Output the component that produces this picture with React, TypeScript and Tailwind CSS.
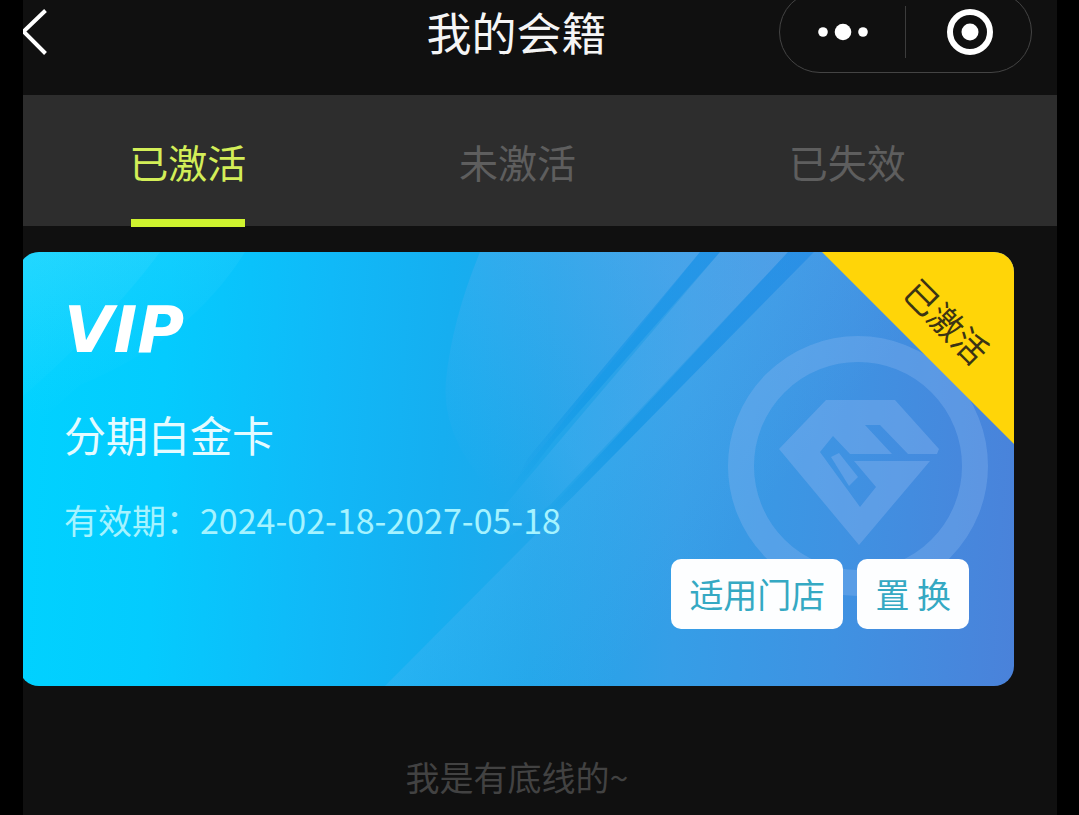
import { useState } from "react";

const tabs = ["已激活", "未激活", "已失效"];

function Header() {
  return (
    <header className="pb-[31px] pr-[47px]">
      <div className="flex h-16 items-center">
        <div className="flex flex-1">
          <button type="button" aria-label="返回" className="h-12 w-8">
            <svg viewBox="0 0 32 48" className="h-12 w-8" fill="none" stroke="#fff" strokeWidth="4">
              <path d="M22.500 2.500 0.500 23.500l22 22" />
            </svg>
          </button>
        </div>
        <h1 className="text-[45px] leading-[60px] text-[#f5f5f5]">我的会籍</h1>
        <div className="flex flex-1 justify-end">
          <div className="-mr-[22px] flex h-[82px] w-[253px] shrink-0 items-center rounded-full border border-[#444]">
            <button type="button" aria-label="更多" className="flex h-full flex-1 items-center justify-center">
              <svg viewBox="0 0 52 18" className="h-[18px] w-[52px]" fill="#fff">
                <circle cx="6" cy="9" r="4.800" />
                <circle cx="26" cy="9" r="8.300" />
                <circle cx="46" cy="9" r="4.800" />
              </svg>
            </button>
            <span className="h-[52px] w-px bg-[#3c3c3c]" />
            <button type="button" aria-label="关闭" className="flex h-full flex-1 items-center justify-center">
              <svg viewBox="0 0 48 48" className="size-12">
                <circle cx="25" cy="24" r="20" fill="none" stroke="#fff" strokeWidth="6" />
                <circle cx="25" cy="24" r="8.500" fill="#fff" />
              </svg>
            </button>
          </div>
        </div>
      </div>
    </header>
  );
}

function Tabs() {
  const [active, setActive] = useState(0);
  return (
    <nav className="grid grid-cols-3 bg-[#2d2d2d] pr-[45px]">
      {tabs.map((label, i) => (
        <button
          key={label}
          type="button"
          aria-pressed={i === active}
          onClick={() => setActive(i)}
          className={
            i === active
              ? "-mb-px flex flex-col items-center text-[39px] leading-[52px] text-[#d3ee58]"
              : "-mb-px flex flex-col items-center text-[39px] leading-[52px] text-[#5e5e5e]"
          }
        >
          <span className="pb-8 pt-10">{label}</span>
          <span className={i === active ? "h-2 w-[114px] bg-[#cff32f]" : "h-2 w-[114px]"} />
        </button>
      ))}
    </nav>
  );
}

function CardArt() {
  return (
    <svg
      viewBox="19 252 995 434"
      preserveAspectRatio="xMaxYMid slice"
      className="absolute inset-0 size-full"
      aria-hidden="true"
    >
      <defs>
        <linearGradient id="base" gradientUnits="userSpaceOnUse" x1="19" y1="440" x2="1024" y2="500">
          <stop offset="0" stopColor="#00d2ff" />
          <stop offset="0.140" stopColor="#04cbfe" />
          <stop offset="0.300" stopColor="#10b9f8" />
          <stop offset="0.420" stopColor="#16aef0" />
          <stop offset="0.520" stopColor="#20a6ea" />
          <stop offset="0.660" stopColor="#359ee7" />
          <stop offset="0.820" stopColor="#3f92e2" />
          <stop offset="1" stopColor="#4a82da" />
        </linearGradient>
        <linearGradient id="glow" gradientUnits="userSpaceOnUse" x1="60" y1="252" x2="110" y2="400">
          <stop offset="0" stopColor="#7be4ff" stopOpacity="0.140" />
          <stop offset="1" stopColor="#7be4ff" stopOpacity="0" />
        </linearGradient>
        <linearGradient id="sheet" gradientUnits="userSpaceOnUse" x1="620" y1="252" x2="510" y2="500">
          <stop offset="0" stopColor="#7ab0ee" stopOpacity="0.280" />
          <stop offset="1" stopColor="#7ab0ee" stopOpacity="0" />
        </linearGradient>
        <linearGradient id="beam" gradientUnits="userSpaceOnUse" x1="760" y1="252" x2="500" y2="540">
          <stop offset="0" stopColor="#86b4ee" stopOpacity="0.260" />
          <stop offset="0.700" stopColor="#6abaf5" stopOpacity="0.220" />
          <stop offset="1" stopColor="#6abaf5" stopOpacity="0" />
        </linearGradient>
        <linearGradient id="streak" gradientUnits="userSpaceOnUse" x1="790" y1="252" x2="540" y2="510">
          <stop offset="0" stopColor="#1287e8" stopOpacity="0.400" />
          <stop offset="0.700" stopColor="#0b94e6" stopOpacity="0.500" />
          <stop offset="1" stopColor="#0b96e4" stopOpacity="0" />
        </linearGradient>
        <linearGradient id="facet" gradientUnits="userSpaceOnUse" x1="470" y1="590" x2="600" y2="700">
          <stop offset="0" stopColor="#6cbaf4" stopOpacity="0.200" />
          <stop offset="1" stopColor="#6cbaf4" stopOpacity="0" />
        </linearGradient>
      </defs>
      <rect x="19" y="252" width="995" height="434" fill="url(#base)" />
      <path d="M19 252H160Q110 320 19 400Z" fill="url(#glow)" />
      <path d="M19 252H245Q190 340 80 385L19 440Z" fill="url(#glow)" />
      <path d="M480 252H700L500 500Q440 440 446 380Q452 320 480 252Z" fill="url(#sheet)" />
      <path d="M720 252H788L550 505L480 560L505 505Z" fill="url(#beam)" />
      <path d="M700 252H720L556 438L500 510L528 458Z" fill="url(#streak)" />
      <path d="M788 252H814L572 498L530 530Z" fill="url(#streak)" />
      <path d="M385 686L530 540L814 252H1014V686Z" fill="url(#facet)" />
      <g fill="#86b3ee" fillOpacity="0.420">
        <circle cx="858" cy="466" r="117" fill="none" stroke="#86b3ee" strokeOpacity="0.360" strokeWidth="26" />
        <path
          fillRule="evenodd"
          d="M826 400H895L939 449L937 454H908L880 425H865L892 454H850L833 436L820 452L860 507L876 487L854 461H930L859 545L779 449Z"
        />
        <path d="M831 457L839 453L858 477L849 486Z" />
      </g>
    </svg>
  );
}

function MembershipCard() {
  return (
    <article className="relative -ml-1 mr-[43px] overflow-hidden rounded-[20px] pb-[57px] pl-[45px] pr-[45px] pt-[46px]">
      <CardArt />
      <div className="absolute right-0 top-0 flex size-48 items-center justify-center bg-[#ffd508] pb-[54px] pl-[58px] [clip-path:polygon(0_0,100%_0,100%_100%)]">
        <span className="rotate-45 whitespace-nowrap text-[34px] leading-[44px] text-[#3b3414]">已激活</span>
      </div>
      <div className="relative">
        <div className="font-['DejaVu_Sans',sans-serif] text-[64px] font-bold italic leading-[64px] text-white">
          VIP
        </div>
        <h2 className="mt-11 text-[42px] leading-[56px] text-[#e4fbff]">分期白金卡</h2>
        <p className="mt-[36px] text-[34px] leading-[44px] text-[#a5f3ff]">有效期：2024-02-18-2027-05-18</p>
        <div className="mt-[17px] flex justify-end gap-[14px]">
          <button
            type="button"
            className="h-[70px] rounded-[10px] bg-[#fdfeff] px-[18px] text-[34px] leading-[44px] text-[#35a9c3]"
          >
            适用门店
          </button>
          <button
            type="button"
            className="h-[70px] rounded-[10px] bg-[#fdfeff] px-[18px] text-[34px] leading-[44px] text-[#35a9c3]"
          >
            置 换
          </button>
        </div>
      </div>
    </article>
  );
}

export default function App() {
  return (
    <div className="min-h-screen bg-black pl-[23px] pr-[22px] font-['Noto_Sans_CJK_SC',sans-serif]">
      <div className="min-h-screen overflow-hidden bg-[#101010]">
        <Header />
        <Tabs />
        <main className="pt-[26px]">
          <MembershipCard />
          <p className="pr-[46px] pt-[69px] text-center text-[34px] leading-[44px] text-[#424242]">
            我是有底线的~
          </p>
        </main>
      </div>
    </div>
  );
}
